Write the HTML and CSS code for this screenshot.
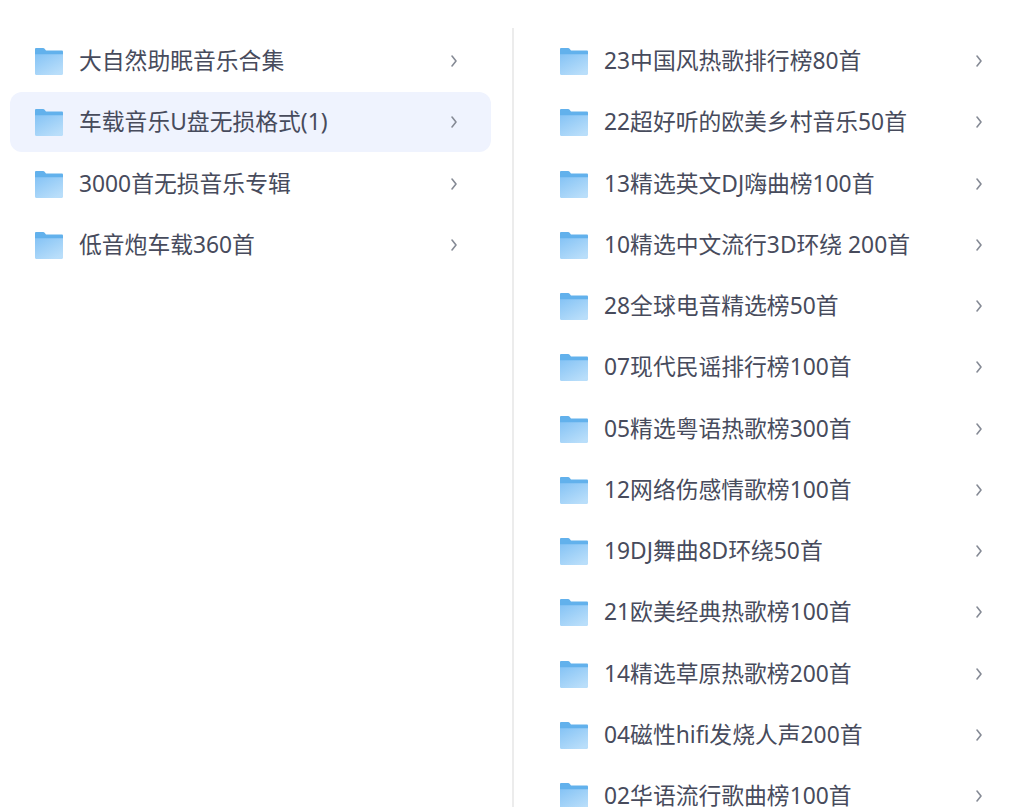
FILE: index.html
```html
<!DOCTYPE html>
<html lang="zh-CN">
<head>
    <meta charset="UTF-8">
    <meta name="viewport" content="width=device-width, initial-scale=1.0">
    <link rel="stylesheet" href="styles.css">
    <title>音乐文件夹</title>
</head>
<body>
    <svg class="defs" width="0" height="0">
        <defs>
            <linearGradient id="folder-front" x1="0" y1="0" x2="0.7" y2="1">
                <stop offset="0" stop-color="#85c3f5"/>
                <stop offset="1" stop-color="#b9defa"/>
            </linearGradient>
            <symbol id="folder" viewBox="0 0 28 28" preserveAspectRatio="none">
                <path d="M0 1.2C0 .5.5 0 1.2 0h7c.5 0 .9.2 1.200.6L11 2.600h15.800c.7 0 1.200.5 1.200 1.200V12H0z" fill="#62b1ec"/>
                <path d="M0 6.400h28v20.400c0 .7-.5 1.200-1.200 1.200H1.200C.5 28 0 27.500 0 26.800z" fill="url(#folder-front)"/>
            </symbol>
            <symbol id="chevron" viewBox="0 0 8 14">
                <path d="M2 2l4 5-4 5" fill="none" stroke="#858a95" stroke-width="1.600" stroke-linecap="round" stroke-linejoin="round"/>
            </symbol>
        </defs>
    </svg>

    <div class="page">
        <div class="column column-left">
            <div class="row">
                <svg class="folder"><use href="#folder"/></svg>
                <span class="name">大自然助眠音乐合集</span>
                <svg class="chevron"><use href="#chevron"/></svg>
            </div>
            <div class="row active">
                <svg class="folder"><use href="#folder"/></svg>
                <span class="name">车载音乐U盘无损格式(1)</span>
                <svg class="chevron"><use href="#chevron"/></svg>
            </div>
            <div class="row">
                <svg class="folder"><use href="#folder"/></svg>
                <span class="name">3000首无损音乐专辑</span>
                <svg class="chevron"><use href="#chevron"/></svg>
            </div>
            <div class="row">
                <svg class="folder"><use href="#folder"/></svg>
                <span class="name">低音炮车载360首</span>
                <svg class="chevron"><use href="#chevron"/></svg>
            </div>
        </div>

        <div class="column column-right">
            <div class="row">
                <svg class="folder"><use href="#folder"/></svg>
                <span class="name">23中国风热歌排行榜80首</span>
                <svg class="chevron"><use href="#chevron"/></svg>
            </div>
            <div class="row">
                <svg class="folder"><use href="#folder"/></svg>
                <span class="name">22超好听的欧美乡村音乐50首</span>
                <svg class="chevron"><use href="#chevron"/></svg>
            </div>
            <div class="row">
                <svg class="folder"><use href="#folder"/></svg>
                <span class="name">13精选英文DJ嗨曲榜100首</span>
                <svg class="chevron"><use href="#chevron"/></svg>
            </div>
            <div class="row">
                <svg class="folder"><use href="#folder"/></svg>
                <span class="name">10精选中文流行3D环绕 200首</span>
                <svg class="chevron"><use href="#chevron"/></svg>
            </div>
            <div class="row">
                <svg class="folder"><use href="#folder"/></svg>
                <span class="name">28全球电音精选榜50首</span>
                <svg class="chevron"><use href="#chevron"/></svg>
            </div>
            <div class="row">
                <svg class="folder"><use href="#folder"/></svg>
                <span class="name">07现代民谣排行榜100首</span>
                <svg class="chevron"><use href="#chevron"/></svg>
            </div>
            <div class="row">
                <svg class="folder"><use href="#folder"/></svg>
                <span class="name">05精选粤语热歌榜300首</span>
                <svg class="chevron"><use href="#chevron"/></svg>
            </div>
            <div class="row">
                <svg class="folder"><use href="#folder"/></svg>
                <span class="name">12网络伤感情歌榜100首</span>
                <svg class="chevron"><use href="#chevron"/></svg>
            </div>
            <div class="row">
                <svg class="folder"><use href="#folder"/></svg>
                <span class="name">19DJ舞曲8D环绕50首</span>
                <svg class="chevron"><use href="#chevron"/></svg>
            </div>
            <div class="row">
                <svg class="folder"><use href="#folder"/></svg>
                <span class="name">21欧美经典热歌榜100首</span>
                <svg class="chevron"><use href="#chevron"/></svg>
            </div>
            <div class="row">
                <svg class="folder"><use href="#folder"/></svg>
                <span class="name">14精选草原热歌榜200首</span>
                <svg class="chevron"><use href="#chevron"/></svg>
            </div>
            <div class="row">
                <svg class="folder"><use href="#folder"/></svg>
                <span class="name">04磁性hifi发烧人声200首</span>
                <svg class="chevron"><use href="#chevron"/></svg>
            </div>
            <div class="row">
                <svg class="folder"><use href="#folder"/></svg>
                <span class="name">02华语流行歌曲榜100首</span>
                <svg class="chevron"><use href="#chevron"/></svg>
            </div>
        </div>
    </div>
</body>
</html>
```

FILE: styles.css
```css
html, body {
    height: 100%;
    margin: 0;
    overflow: hidden;
    background-color: white;
}

.defs {
    display: block;
    height: 0;
}

.page {
    display: flex;
    height: 807px;
    padding: 28px 4px 0 10px;
    box-sizing: border-box;
    font-family: "Noto Sans", "Noto Sans CJK SC", sans-serif;
}

.column {
    flex: none;
    width: 481px;
    padding-top: 3px;
}

.column-left {
    margin-right: 21px;
}

.column-right {
    border-left: 2px solid #ececec;
    padding-left: 21px;
}

.row {
    display: flex;
    align-items: center;
    height: 60px;
    margin-bottom: 1.25px;
    padding: 0 33px 0 25px;
    border-radius: 12px;
    color: #474b5c;
    font-size: 22.8px;
}

.active {
    background-color: #eff3fe;
}

.folder {
    flex: none;
    width: 28px;
    height: 27px;
    margin: 1px 16px 0 0;
}

.name {
    flex: 1;
    padding-bottom: 3px;
    white-space: nowrap;
}

.chevron {
    flex: none;
    width: 8px;
    height: 14px;
}
```
